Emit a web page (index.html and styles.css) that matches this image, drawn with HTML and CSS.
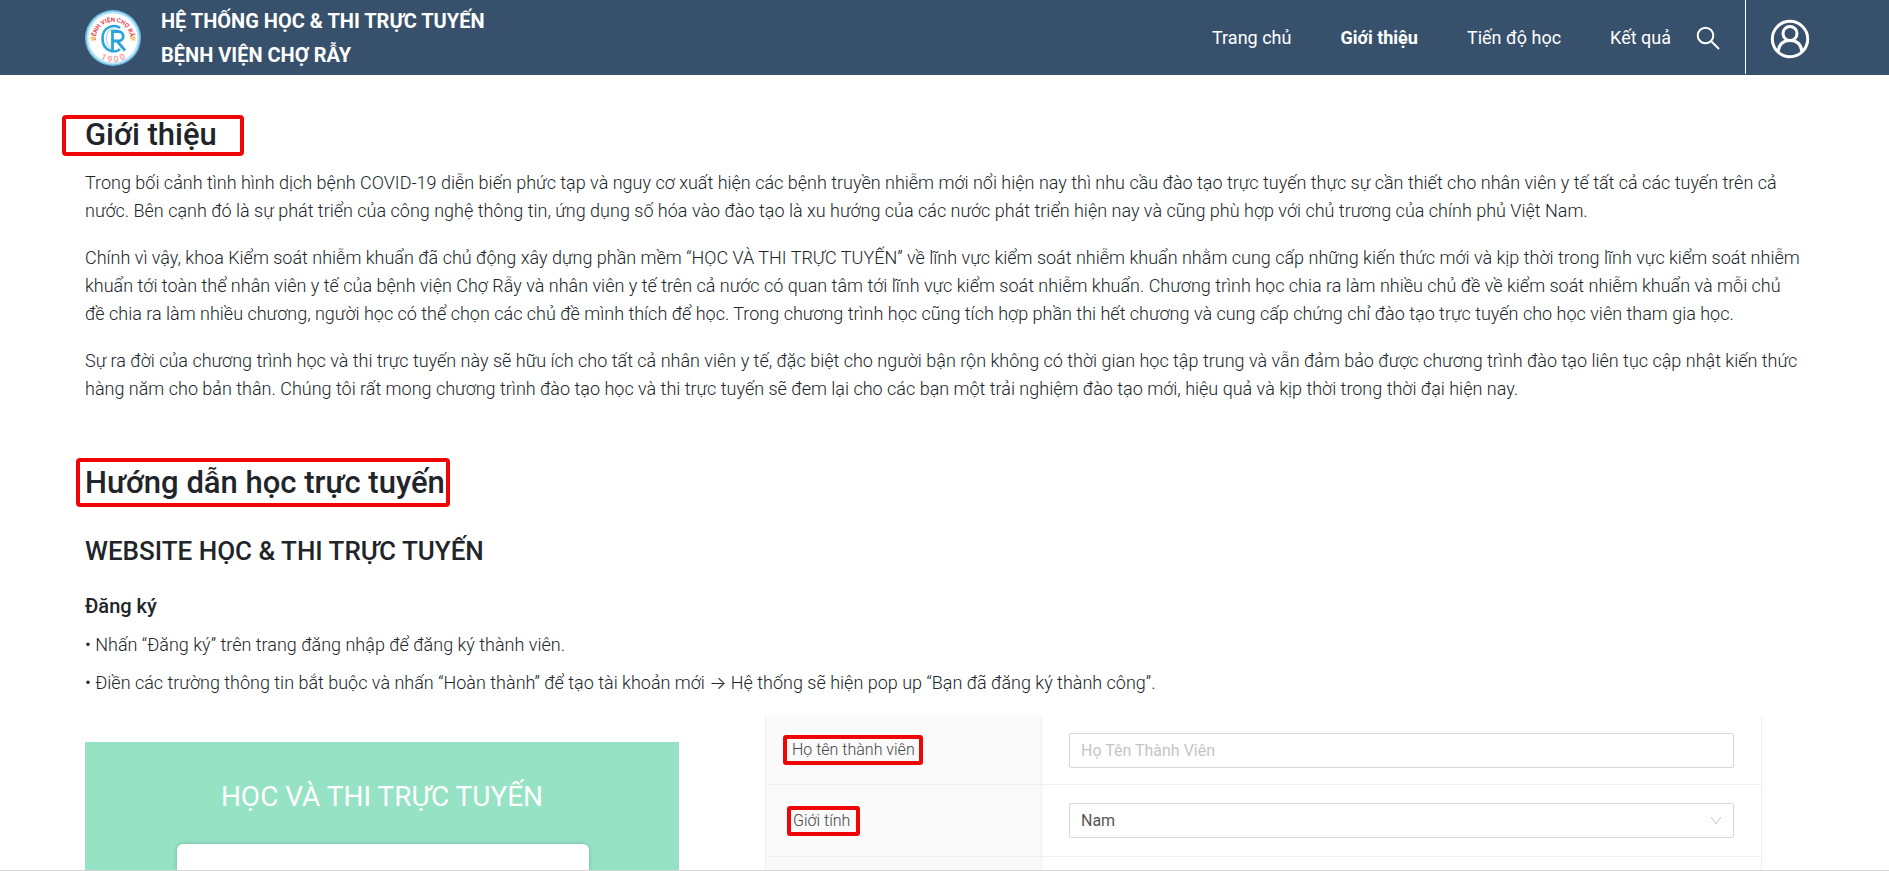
FILE: index.html
```
<!DOCTYPE html>
<html lang="vi">
<head>
<meta charset="utf-8">
<meta name="viewport" content="width=device-width, initial-scale=1">
<title>Giới thiệu - Hệ thống học &amp; thi trực tuyến</title>
<link rel="stylesheet" href="styles.css">
</head>
<body>
<header class="topbar">
  <a class="brand" href="#">
    <svg class="logo" viewBox="0 0 56 56" aria-hidden="true">
      <defs><path id="arc" d="M11.500 35A17.500 17.500 0 1 1 44.500 35"/><path id="base" d="M7 38A22.500 22.500 0 0 0 49 38"/></defs>
      <circle cx="28" cy="28" r="28" fill="#69b9e3"/>
      <circle cx="28" cy="28" r="26.500" fill="#b9e4f5"/>
      <circle cx="28" cy="28" r="24.500" fill="#fff"/>
      <text class="logo-name"><textPath href="#arc" startOffset="50%">BỆNH VIỆN CHỢ RẪY</textPath></text>
      <text class="logo-year"><textPath href="#base" startOffset="50%">1 9 0 0</textPath></text>
      <path d="M35 18C31 14.500 17.500 15 17.500 28.500C17.500 42 31 43.500 35 39" fill="none" stroke="#2ba3dc" stroke-width="2.600"/>
      <path d="M34 21C26 16 21.500 21 21.500 28.500C21.500 35 25 38.500 27 38.500" fill="none" stroke="#8fd0ee" stroke-width="1"/>
      <path d="M27.500 40V21.500H33C40 21.500 40 31 33 31H28M32 31L40 40.500" fill="none" stroke="#2ba3dc" stroke-width="2.800"/>
      <path d="M7.500 25l1 2.200 2.400.2-1.800 1.600.6 2.400-2.200-1.300-2.200 1.300.6-2.400-1.800-1.600 2.400-.2zM48.500 25l1 2.200 2.400.2-1.800 1.600.6 2.400-2.200-1.300-2.200 1.300.6-2.400-1.800-1.600 2.400-.2z" fill="#f3cf72"/>
    </svg>
    <span class="brand-name">HỆ THỐNG HỌC &amp; THI TRỰC TUYẾN<br>BỆNH VIỆN CHỢ RẪY</span>
  </a>
  <nav class="nav">
    <a href="#">Trang chủ</a>
    <a href="#" class="active" aria-current="page">Giới thiệu</a>
    <a href="#">Tiến độ học</a>
    <a href="#">Kết quả</a>
  </nav>
  <button class="icon-button search" type="button" aria-label="Tìm kiếm">
    <svg viewBox="0 0 24 24" width="24" height="24"><circle cx="9.500" cy="9.500" r="7.800"/><path d="M15 15l8 8"/></svg>
  </button>
  <button class="icon-button account" type="button" aria-label="Tài khoản">
    <svg viewBox="0 0 40 40" width="40" height="40"><circle cx="20" cy="20" r="17.700"/><circle cx="20" cy="14.500" r="7"/><path d="M8 32.500C9 25 13.500 21.500 20 21.500S31 25 32 32.500"/></svg>
  </button>
</header>
<main class="page">
  <section>
    <h1 class="heading"><span class="mark mark-wide">Giới thiệu</span></h1>
    <div class="prose">
      <p>Trong bối cảnh tình hình dịch bệnh COVID-19 diễn biến phức tạp và nguy cơ xuất hiện các bệnh truyền nhiễm mới nổi hiện nay thì nhu cầu đào tạo trực tuyến thực sự cần thiết cho nhân viên y tế tất cả các tuyến trên cả<br>nước. Bên cạnh đó là sự phát triển của công nghệ thông tin, ứng dụng số hóa vào đào tạo là xu hướng của các nước phát triển hiện nay và cũng phù hợp với chủ trương của chính phủ Việt Nam.</p>
      <p>Chính vì vậy, khoa Kiểm soát nhiễm khuẩn đã chủ động xây dựng phần mềm “HỌC VÀ THI TRỰC TUYẾN” về lĩnh vực kiểm soát nhiễm khuẩn nhằm cung cấp những kiến thức mới và kịp thời trong lĩnh vực kiểm soát nhiễm<br>khuẩn tới toàn thể nhân viên y tế của bệnh viện Chợ Rẫy và nhân viên y tế trên cả nước có quan tâm tới lĩnh vực kiểm soát nhiễm khuẩn. Chương trình học chia ra làm nhiều chủ đề về kiểm soát nhiễm khuẩn và mỗi chủ<br>đề chia ra làm nhiều chương, người học có thể chọn các chủ đề mình thích để học. Trong chương trình học cũng tích hợp phần thi hết chương và cung cấp chứng chỉ đào tạo trực tuyến cho học viên tham gia học.</p>
      <p>Sự ra đời của chương trình học và thi trực tuyến này sẽ hữu ích cho tất cả nhân viên y tế, đặc biệt cho người bận rộn không có thời gian học tập trung và vẫn đảm bảo được chương trình đào tạo liên tục cập nhật kiến thức<br>hàng năm cho bản thân. Chúng tôi rất mong chương trình đào tạo học và thi trực tuyến sẽ đem lại cho các bạn một trải nghiệm đào tạo mới, hiệu quả và kịp thời trong thời đại hiện nay.</p>
    </div>
  </section>
  <section class="guide">
    <h2 class="heading"><span class="mark mark-tall">Hướng dẫn học trực tuyến</span></h2>
    <h3 class="subheading">WEBSITE HỌC &amp; THI TRỰC TUYẾN</h3>
    <h4 class="step">Đăng ký</h4>
    <ul class="notes">
      <li>Nhấn “Đăng ký” trên trang đăng nhập để đăng ký thành viên.</li>
      <li>Điền các trường thông tin bắt buộc và nhấn “Hoàn thành” để tạo tài khoản mới → Hệ thống sẽ hiện pop up “Bạn đã đăng ký thành công”.</li>
    </ul>
    <div class="demo">
      <div class="login">
        <p class="login-title">HỌC VÀ THI TRỰC TUYẾN</p>
        <div class="login-card"></div>
      </div>
      <form class="fields">
        <div class="row">
          <div class="cell label-cell"><label class="field-mark" for="name">Họ tên thành viên</label></div>
          <div class="cell"><input class="control" id="name" type="text" placeholder="Họ Tên Thành Viên"></div>
        </div>
        <div class="row">
          <div class="cell label-cell"><label class="field-mark field-mark-tight" for="gender">Giới tính</label></div>
          <div class="cell">
            <select class="control" id="gender"><option>Nam</option><option>Nữ</option></select>
            <svg class="chevron" viewBox="0 0 12 10" width="12" height="10" aria-hidden="true"><path d="M1 1l5 7 5-7"/></svg>
          </div>
        </div>
        <div class="row"><div class="cell label-cell"></div><div class="cell"></div></div>
      </form>
    </div>
  </section>
</main>
</body>
</html>
```
FILE: styles.css
```
* { box-sizing: border-box; }
html { height: 100%; }
body {
  height: 100%;
  margin: 0;
  display: flex;
  flex-direction: column;
  overflow: hidden;
  border-bottom: 1px solid #d5d5d5;
  background: #fff;
  color: #212529;
  font: 300 18px/28px Roboto, Inter, "Noto Sans", sans-serif;
}
h1, h2, h3, h4, p, ul { margin: 0; }

.topbar {
  flex: none;
  display: flex;
  align-items: center;
  height: 75px;
  padding: 0 79px 0 85px;
  background: #37516c;
  color: #fff;
}
.topbar a { color: inherit; text-decoration: none; }
.brand { display: flex; align-items: center; gap: 20px; }
.logo { width: 56px; height: 56px; }
.logo-name { font: 700 6px Roboto, sans-serif; fill: #e8414c; text-anchor: middle; }
.logo-year { font: 700 9px Roboto, sans-serif; fill: #f3a5aa; text-anchor: middle; }
.brand-name { font-size: 20px; font-weight: 700; line-height: 34px; }
.nav { display: flex; gap: 49px; margin-left: auto; font-weight: 400; }
.nav .active { font-weight: 700; }
.icon-button {
  display: flex;
  align-items: center;
  padding: 0;
  border: 0;
  background: none;
}
.icon-button svg { fill: none; stroke: #fff; stroke-width: 2; }
.search { margin: 0 25px; }
.account { height: 74px; align-self: flex-start; padding: 4px 0 0 24px; border-left: 1px solid #fff; }
.account svg { stroke-width: 3; }

.page { flex: 1; min-height: 0; overflow: hidden; padding: 40px 60px 0 85px; }
.heading { font-size: 31px; font-weight: 500; line-height: 41px; }
.mark {
  display: inline-block;
  border: 4px solid #f00505;
  border-radius: 4px;
  vertical-align: top;
}
.mark-wide { margin-left: -23px; padding: 0 23px 2px 19px; line-height: 31px; }
.mark-tall { margin-left: -9px; padding: 0 1px 0 5px; line-height: 41px; }
.prose { display: grid; gap: 19px; padding-top: 13px; }
.guide { padding-top: 55px; }
.subheading { margin-top: 26px; font-size: 26px; font-weight: 500; line-height: 36px; }
.step { margin-top: 23px; font-size: 20px; font-weight: 500; line-height: 28px; }
.notes { display: grid; gap: 10px; margin-top: 11px; padding: 0; list-style: none; }
.notes li::before { content: "• "; }

.demo { display: flex; align-items: flex-start; gap: 86px; margin-top: 19px; }
.login {
  flex: 0 0 594px;
  height: 300px;
  margin-top: 26px;
  padding-top: 37px;
  background: #95e2c5;
  text-align: center;
}
.login-title { color: #fff; font-size: 28px; font-weight: 400; line-height: 36px; }
.login-card {
  height: 260px;
  margin: 29px 90px 0 92px;
  border-radius: 6px;
  background: #fff;
  box-shadow: 0 0 4px rgba(0, 0, 0, .2);
}
.fields { flex: 1; margin-right: 67px; border: solid #efefef; border-width: 0 1px; color: #444; font-size: 16px; }
.row { display: grid; grid-template-columns: 276px 1fr; height: 72px; border-bottom: 1px solid #efefef; }
.row:first-child { height: 69px; }
.cell { position: relative; display: flex; align-items: center; padding: 0 27px; }
.label-cell { padding: 0 17px; border-right: 1px solid #efefef; background: #fafafa; }
.field-mark { padding: 0 4px 0 5px; border: 4px solid #f00505; border-radius: 3px; line-height: 22px; }
.field-mark-tight { margin-left: 4px; padding: 0 6px 0 2px; }
.control {
  width: 100%;
  height: 35px;
  padding: 0 11px;
  border: 1px solid #d9d9d9;
  border-radius: 2px;
  background: #fff;
  color: #555;
  font: 400 16px Roboto, "Noto Sans", sans-serif;
  appearance: none;
}
.control::placeholder { color: #c4c4c4; opacity: 1; }
.chevron { position: absolute; right: 39px; top: 31px; fill: none; stroke: #c4c4c4; stroke-width: 1; }
```
